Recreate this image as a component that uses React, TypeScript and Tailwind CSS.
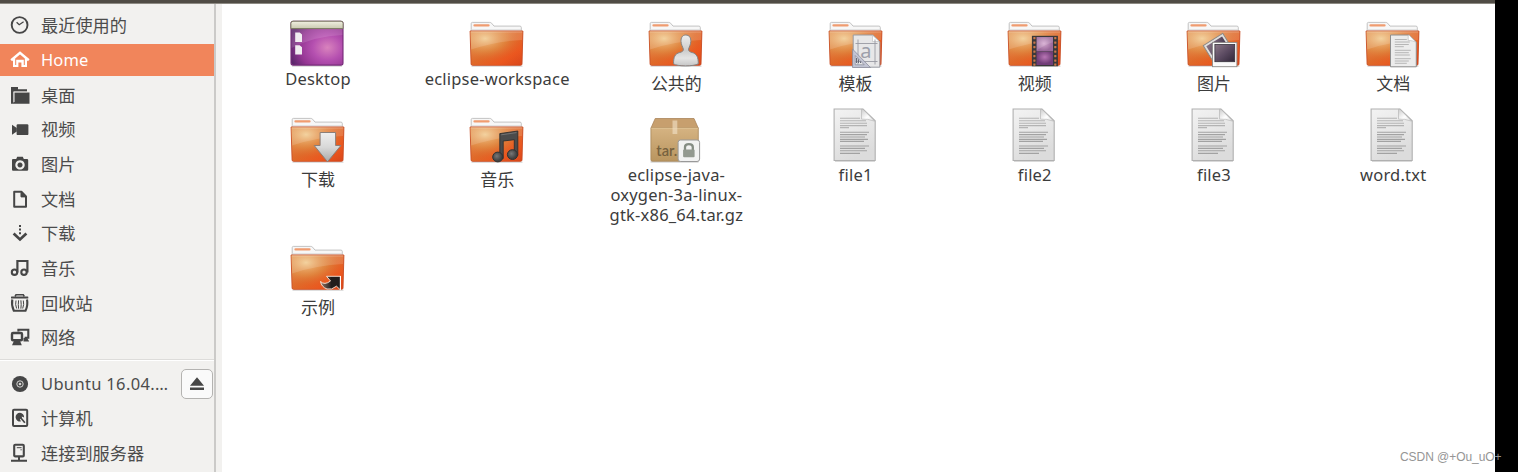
import React from "react";

const INK = "#464646";

function ClockIcon() {
  return (
    <>
      <circle cx="9.6" cy="10" r="7.9" fill="none" stroke={INK} strokeWidth="1.9" />
      <path d="M6.6 7.2 9.2 9.7 13.6 6.8" fill="none" stroke={INK} strokeWidth="1.3" />
    </>
  );
}

function HomeIcon() {
  return (
    <>
      <path d="M1.2 10.2 10 2.8l8.8 7.4" fill="none" stroke="#fff" strokeWidth="2.5" />
      <path d="M3 8.5v8.6h5.4v-4.6h3v4.6H17V8.5h-2.2v6.4h-1V9.8H6.2v5.1h-1V8.5z" fill="#fff" />
    </>
  );
}

function DesktopIcon() {
  return (
    <>
      <path d="M1 2h7v2.2h9v2.2H3.6V18H1z" fill={INK} />
      <path d="M4.5 7.4h15V18.7H1V17h3.5z" fill={INK} />
      <path d="M3.6 17.5V6.9h13.6" fill="none" stroke="#d8d7d5" strokeWidth=".7" />
    </>
  );
}

function VideoIcon() {
  return (
    <>
      <rect x="6.6" y="5.3" width="11.8" height="10.8" rx="1.2" fill={INK} />
      <path d="M2 5.7v10l4.8-3.2V8.9z" fill={INK} />
    </>
  );
}

function CameraIcon() {
  return (
    <path
      fill={INK}
      fillRule="evenodd"
      d="M2 6q0-1 1-1h3.2l1-2.3h5.6l1 2.3H17q1.2 0 1.2 1v9.5q0 1.2-1.2 1.2H3q-1 0-1-1.2zM10 6.2a4.7 4.7 0 1 0 .01 0zM10 8.4a2.5 2.5 0 1 1-.01 0z"
    />
  );
}

function DocIcon() {
  return (
    <>
      <path d="M4.2 2.8h7.2l4.6 4.6v10.4H4.2z" fill="none" stroke={INK} strokeWidth="2" strokeLinejoin="round" />
      <path d="M11 3.3v4.6h4.8z" fill={INK} stroke={INK} />
    </>
  );
}

function DownIcon() {
  return (
    <>
      <path d="M10 2v10" stroke={INK} strokeWidth="2" strokeDasharray="2 1.6" />
      <path d="M3.6 10.4 10 16.4l6.4-6" fill="none" stroke={INK} strokeWidth="2.7" />
    </>
  );
}

function MusicIcon() {
  return (
    <>
      <circle cx="4.5" cy="14.2" r="2.7" fill="none" stroke={INK} strokeWidth="2.1" />
      <circle cx="14" cy="14.2" r="2.7" fill="none" stroke={INK} strokeWidth="2.1" />
      <path d="M7.4 14.4V3h10v11.4" fill="none" stroke={INK} strokeWidth="2.2" />
    </>
  );
}

function TrashIcon() {
  return (
    <>
      <path d="M5 3.5 6 1.8h7.3l1 1.7" fill="none" stroke={INK} strokeWidth="1.5" />
      <rect x="1" y="3.5" width="17.3" height="2" rx=".6" fill={INK} />
      <path d="M2.3 6.5Q1.2 12 3.8 17.8h11.7Q18.2 12 17 6.5" fill="none" stroke={INK} strokeWidth="2.1" />
      <path d="M6 7.5q-1 4 .6 8M13.3 7.5q1 4-.6 8M8.6 7.3q-.6 4.2 0 8.4M10.9 7.3q.6 4.2 0 8.4" fill="none" stroke={INK} strokeWidth="1" />
    </>
  );
}

function NetworkIcon() {
  return (
    <>
      <path d="M8.4 4.6V2.7h9.9v8.1h-3.7" fill="none" stroke={INK} strokeWidth="2.1" />
      <path d="M13.5 11h3.7l2 3.6h-5.7z" fill={INK} />
      <rect x="2" y="6" width="10" height="7.2" rx="1" fill="none" stroke={INK} strokeWidth="2.4" />
      <path d="M4 13.7h6l1.8 4.5H2z" fill={INK} />
    </>
  );
}

function DiscIcon() {
  return (
    <>
      <circle cx="10" cy="10" r="8.1" fill={INK} />
      <circle cx="10" cy="10" r="3.2" fill="none" stroke="#d6d5d3" strokeWidth="1" />
      <circle cx="10" cy="10" r="1.3" fill="#d6d5d3" />
    </>
  );
}

function DriveIcon() {
  return (
    <>
      <rect x="3" y="1.8" width="14.2" height="16.2" rx="1" fill="none" stroke={INK} strokeWidth="2" />
      <path d="M10 4.7a4.4 4.4 0 1 0 .9 8.7l-1-2.3 2-.8-.2-1.8 2.4.9A4.4 4.4 0 0 0 10 4.7z" fill={INK} />
      <path d="m10.3 9.2 4.6 5.6" stroke={INK} strokeWidth="1.7" />
    </>
  );
}

function ServerIcon() {
  return (
    <>
      <rect x="4.2" y="1.8" width="9.6" height="11.6" rx="1" fill="none" stroke={INK} strokeWidth="2.1" />
      <path d="M6.8 4.7h4.8M10.5 6.8h1.2" stroke={INK} strokeWidth="1" />
      <path d="M9 13v4M1 17.8h16" stroke={INK} strokeWidth="2" />
    </>
  );
}

type Place = { label: string; Icon: () => React.JSX.Element; active?: boolean; latin?: string; eject?: boolean };

const places: Place[] = [
  { label: "最近使用的", Icon: ClockIcon },
  { label: "Home", Icon: HomeIcon, active: true, latin: "tracking-[0.1px]" },
  { label: "桌面", Icon: DesktopIcon },
  { label: "视频", Icon: VideoIcon },
  { label: "图片", Icon: CameraIcon },
  { label: "文档", Icon: DocIcon },
  { label: "下载", Icon: DownIcon },
  { label: "音乐", Icon: MusicIcon },
  { label: "回收站", Icon: TrashIcon },
  { label: "网络", Icon: NetworkIcon },
];

const devices: Place[] = [
  { label: "Ubuntu 16.04.…", Icon: DiscIcon, latin: "tracking-[0.33px]", eject: true },
  { label: "计算机", Icon: DriveIcon },
  { label: "连接到服务器", Icon: ServerIcon },
];

function PlaceRow({ label, Icon, active, latin, eject }: Place) {
  return (
    <li className="flex h-[34.67px] items-center">
      <div className={`flex h-[32.5px] w-full items-center pl-[10px] ${active ? "bg-[#f1855b] text-white" : "text-[#4c4c4c]"}`}>
        <svg viewBox="0 0 20 20" className="size-5 shrink-0"><Icon /></svg>
        <span className={`ml-[11px] flex-1 whitespace-nowrap leading-5 ${latin ? `text-[16.5px] ${latin}` : "pt-[2px] text-[17.2px]"}`}>{label}</span>
        {eject && (
          <button className="mr-[1px] flex h-[30px] w-8 items-center justify-center rounded-[5px] border border-[#b4b3b1] bg-[#fafafa]">
            <svg viewBox="0 0 14 14" className="size-[14px]">
              <path d="M7 .2 14 8.7H0zM0 10.5h14v2.4H0z" fill={INK} />
            </svg>
          </button>
        )}
      </div>
    </li>
  );
}

function Folder({ children }: { children?: React.ReactNode }) {
  return (
    <g transform="translate(.5 0)">
      <path d="M2 54.3h51" stroke="#000" strokeOpacity=".13" strokeWidth="1.5" />
      <path d="M1.7 20V11.6q0-1.2 1.2-1.2h17.4q1 0 1.8.8l2.4 2.9h25.9q1.4 0 1.4 1.3V20z" fill="#f7f7f7" stroke="#bcbcbc" strokeWidth=".9" />
      <path d="M5 13.4h14" stroke="#f09c70" strokeWidth="2.3" strokeLinecap="round" />
      <path d="M2 17.9h49.5" stroke="#dcdcdc" strokeWidth="1.4" />
      <path d="M.6 19h52.8l-.9 33q-.1 1.3-1.3 1.3H2.9q-1.2 0-1.3-1.3z" fill="url(#folderBase)" stroke="#c64a20" strokeWidth=".9" />
      <path d="M1 19.4h52l-.9 32.5H2z" fill="url(#folderGlow)" />
      <path d="M1.2 19.5h51.6l-.3 8.5Q27 29 1.6 37.5z" fill="#fff" fillOpacity=".14" />
      <path d="M1.2 19.9h51.6" stroke="#fff" strokeOpacity=".3" />
      {children}
    </g>
  );
}

function TextLines() {
  return (
    <g stroke="#a2a2a2" strokeWidth="1.1">
      <path d="M12 10.2h20M12 12.8h26M12 15.2h27M12 17.6h27M12 19.6h9" strokeOpacity=".75" />
      <path d="M12 24.2h29M12 26.6h27M12 29h25M12 31.4h28M12 33.4h24" />
      <path d="M12 38h29M12 40.4h25M12 42.8h27M12 45.4h20" />
    </g>
  );
}

function TextFile() {
  return (
    <>
      <path d="M7 53.5h40" stroke="#000" strokeOpacity=".15" />
      <path d="M6.1 1h28.9L47.2 12.8v39.7H6.1z" fill="url(#paper)" stroke="#b0b0b0" strokeWidth="1.1" />
      <TextLines />
      <path d="M33.5 1.3v9.8q5.5-.6 13.2 2.1L35 1.3z" fill="url(#curl)" stroke="#b0b0b0" strokeWidth=".6" />
    </>
  );
}

function DesktopArt() {
  return (
    <>
      <path d="M2 54h50" stroke="#000" strokeOpacity=".12" strokeWidth="2" />
      <rect x="1" y="9.3" width="52" height="43.8" rx="2.2" fill="url(#desk)" stroke="#762b78" strokeWidth="1.1" />
      <path d="M1.5 17h51v6Q25 24 1.5 36z" fill="#fff" fillOpacity=".13" />
      <path d="M.9 16.6v-5.3q0-2.1 2.1-2.1h48q2.1 0 2.1 2.1v5.3z" fill="url(#panel)" stroke="#7c7c62" strokeWidth="1" />
      <path d="M5.2 20.6h4.5l2.3 2v7.4H5.2zM5.2 33.2h4.5l2.3 2v7.2H5.2z" fill="#f1edf1" />
    </>
  );
}

function PublicArt() {
  return (
    <Folder>
      <path d="M37.3 23c-3.4 0-5 2.8-4.8 6.5.2 3.3 1.6 5 2.3 7.5.3 2-1 2.8-3.6 3.5-4.7 1.2-6.2 4.5-6.2 11.3 3.8 2.8 20 2.8 24.8 0 0-6.5-1.4-10-6.2-11.3-2.5-.7-3.8-1.5-3.5-3.5.7-2.5 2-4.2 2.2-7.5.2-3.7-1.5-6.5-5-6.5z" fill="url(#silver)" stroke="#858585" strokeWidth="1" />
    </Folder>
  );
}

function TemplateArt() {
  return (
    <Folder>
      <path d="M24.7 23h19.6l7 7v25.2H24.7z" fill="#e7e7e8" stroke="#999ba2" strokeWidth="1" />
      <path d="M44 23.2v6.3h6.8z" fill="#fff" stroke="#bbb" strokeWidth=".6" />
      <path d="M27 31.5h22M27 49.5h22M29.5 27.5v25M46.5 27.5v25" stroke="#999aa3" strokeWidth=".9" />
      <text x="31.8" y="46.3" fontSize="20" fontFamily="Noto Sans, sans-serif" fill="#9d9faa">a</text>
      <path fillRule="evenodd" d="M24 37 42 55.6H24zM26.7 43.5v9.3h9z" fill="#bfc1d1" fillOpacity=".9" stroke="#858797" strokeWidth=".7" />
      <path d="M28 46v5M30 47.5v3.5M32 49.5V51" stroke="#666877" />
    </Folder>
  );
}

function VideoArt() {
  const holes = [24.9, 29.4, 33.9, 38.4, 42.9, 47.4, 51.4];
  return (
    <Folder>
      <rect x="24.4" y="23.8" width="26" height="30.5" fill="#39383a" />
      {holes.map((y) => (
        <g key={y} fill="#c8774a">
          <rect x="25.8" y={y} width="2.2" height="2.3" rx=".4" />
          <rect x="46.7" y={y} width="2.2" height="2.3" rx=".4" />
        </g>
      ))}
      <rect x="29" y="25" width="16.5" height="14.4" fill="url(#filmA)" />
      <rect x="29" y="39.7" width="16.5" height="13.3" fill="url(#filmB)" />
      <path d="M29.3 25.2h16v5q-7 2-16 8z" fill="#fff" fillOpacity=".15" />
    </Folder>
  );
}

function PictureArt() {
  return (
    <Folder>
      <g transform="rotate(-32 30 36)">
        <rect x="20" y="27" width="23" height="21" fill="#e0dfdd" stroke="#888" strokeWidth=".9" />
        <rect x="22.2" y="29.2" width="18.6" height="15" fill="url(#photo)" />
      </g>
      <rect x="26" y="30.4" width="24.4" height="24.3" fill="#fafafa" stroke="#8c8a88" strokeWidth=".9" />
      <rect x="28.4" y="32.5" width="19.8" height="17.2" fill="url(#photo)" stroke="#37323c" strokeWidth=".8" />
    </Folder>
  );
}

function DocumentArt() {
  return (
    <Folder>
      <path d="M25 23h18.5l7.3 7v24.8H25z" fill="#ececec" stroke="#8e8e8e" strokeWidth="1" />
      <path d="M42.7 23.2v5.2q4 0 7.6 1.7L43.8 23.2z" fill="#fff" stroke="#b4b4b4" strokeWidth=".6" />
      <path d="M29.3 27.5h12M29.3 30h15M29.3 32.5h14M29.3 34.7h9M29.3 38.3h16M29.3 40.7h14M29.3 43h15M29.3 46.7h16M29.3 49h14M29.3 51.3h12" stroke="#b0b0b0" strokeWidth=".9" />
    </Folder>
  );
}

function DownloadArt() {
  return (
    <Folder>
      <path d="M29.6 24.5h15.5v13h5.3L37 53.8 23.7 37.5h5.9z" fill="url(#arrow)" stroke="#8b7f79" strokeWidth="1" />
    </Folder>
  );
}

function MusicArt() {
  return (
    <Folder>
      <path d="M30.3 25.6 48.3 23v24.5h-3.5V31.7L33.7 33v17.5h-3.4z" fill="#4b4b4b" stroke="#303030" strokeWidth=".9" />
      <ellipse cx="28.3" cy="49" rx="5.1" ry="4.9" fill="url(#noteBall)" stroke="#333" />
      <ellipse cx="43" cy="46.6" rx="5.1" ry="4.9" fill="url(#noteBall)" stroke="#333" />
      <path d="M31.7 26.8 47 24.6" stroke="#858585" strokeWidth=".7" />
    </Folder>
  );
}

function LinkArt() {
  return (
    <Folder>
      <path d="M30 45.5Q34 49.5 40 45L36 40.3h14V54l-4-3.8q-5 4-9.500 2.800Q31 51 30 45.500z" fill="url(#linkArrow)" stroke="#fbe9dd" strokeWidth=".9" />
      <path d="M49.900 40v14" stroke="#fff" strokeWidth="1.1" />
    </Folder>
  );
}

function ArchiveArt() {
  return (
    <g transform="translate(1.5 0)">
      <path d="M1 53.800h48" stroke="#000" strokeOpacity=".16" strokeWidth="2" />
      <path d="M5.700 10.500h38.800L48.700 20H1.500z" fill="#c79f6e" stroke="#ab855b" strokeWidth=".8" />
      <path d="M1.400 20h47.400v31.700q0 1.500-1.500 1.500H2.800q-1.400 0-1.400-1.500z" fill="url(#box)" stroke="#a7875b" strokeWidth=".8" />
      <path d="M1.800 20.300h46.600" stroke="#e5c99a" strokeWidth="1.1" />
      <path d="M23 12.500h4.800v13.500H23z" fill="#efdfc3" fillOpacity=".65" />
      <text x="6.800" y="48" fontSize="15.500" fontWeight="600" fontFamily="Lato, sans-serif" fill="#76613e" textLength="21" lengthAdjust="spacingAndGlyphs">tar.</text>
      <rect x="28.600" y="32" width="21.500" height="21.500" rx="2.500" fill="#f2f2f2" stroke="#999" strokeWidth="1" />
      <path d="M35.500 43v-4q0-2.800 3.900-2.800t3.900 2.800v4" fill="none" stroke="#858d84" strokeWidth="2.300" />
      <rect x="33.600" y="41.600" width="11.500" height="7.700" rx="1" fill="#939990" />
    </g>
  );
}

function Gradients() {
  return (
    <svg className="absolute size-0" aria-hidden="true">
      <defs>
        <linearGradient id="folderBase" x1="0" y1="0" x2="1" y2="1"><stop stopColor="#e99a5c" /><stop offset=".5" stopColor="#e0702c" /><stop offset=".75" stopColor="#ee5a20" /><stop offset="1" stopColor="#d8441a" /></linearGradient>
        <radialGradient id="folderGlow" cx=".28" cy=".22" r=".72"><stop stopColor="#f2cf94" stopOpacity=".95" /><stop offset=".55" stopColor="#e0924a" stopOpacity=".55" /><stop offset="1" stopColor="#dd4c1c" stopOpacity=".2" /></radialGradient>
        <linearGradient id="paper" x1="0" y1="0" x2=".4" y2="1"><stop stopColor="#f3f3f3" /><stop offset="1" stopColor="#dcdcdc" /></linearGradient>
        <linearGradient id="curl" x1="0" y1="0" x2="1" y2="1"><stop stopColor="#ccc" /><stop offset=".55" stopColor="#fff" /><stop offset="1" stopColor="#ddd" /></linearGradient>
        <radialGradient id="desk" cx=".7" cy=".6" r=".75"><stop stopColor="#d983bd" /><stop offset=".38" stopColor="#b550b0" /><stop offset=".72" stopColor="#943693" /><stop offset="1" stopColor="#5b276b" /></radialGradient>
        <linearGradient id="panel" x1="0" y1="0" x2="0" y2="1"><stop stopColor="#f1f0e2" /><stop offset="1" stopColor="#cac9b0" /></linearGradient>
        <linearGradient id="silver" x1="0" y1="0" x2="0" y2="1"><stop stopColor="#eee" /><stop offset=".5" stopColor="#ccc" /><stop offset=".75" stopColor="#e4e4e4" /><stop offset="1" stopColor="#c6c6c6" /></linearGradient>
        <radialGradient id="filmA" cx=".45" cy=".45"><stop stopColor="#d4a7cf" /><stop offset="1" stopColor="#9b6a9c" /></radialGradient>
        <radialGradient id="filmB" cx=".5" cy=".4"><stop stopColor="#b976b5" /><stop offset="1" stopColor="#713d78" /></radialGradient>
        <linearGradient id="photo" x1="0" y1="0" x2="1" y2="1"><stop stopColor="#897685" /><stop offset=".5" stopColor="#5c4b62" /><stop offset="1" stopColor="#302638" /></linearGradient>
        <linearGradient id="arrow" x1="0" y1="0" x2="0" y2="1"><stop stopColor="#efefef" /><stop offset=".5" stopColor="#d8d8d8" /><stop offset="1" stopColor="#a9a9a9" /></linearGradient>
        <radialGradient id="noteBall" cx=".4" cy=".4"><stop stopColor="#777" /><stop offset="1" stopColor="#414141" /></radialGradient>
        <linearGradient id="linkArrow" x1="0" y1="0" x2="1" y2="0"><stop stopColor="#917768" /><stop offset=".55" stopColor="#221d1c" /></linearGradient>
        <linearGradient id="box" x1="0" y1="0" x2="0" y2="1"><stop stopColor="#d5b382" /><stop offset="1" stopColor="#b9955f" /></linearGradient>
      </defs>
    </svg>
  );
}

type Item = { lines: string[]; Art: () => React.JSX.Element; cjk?: boolean };

const items: Item[] = [
  { lines: ["Desktop"], Art: DesktopArt },
  { lines: ["eclipse-workspace"], Art: () => <Folder /> },
  { lines: ["公共的"], Art: PublicArt, cjk: true },
  { lines: ["模板"], Art: TemplateArt, cjk: true },
  { lines: ["视频"], Art: VideoArt, cjk: true },
  { lines: ["图片"], Art: PictureArt, cjk: true },
  { lines: ["文档"], Art: DocumentArt, cjk: true },
  { lines: ["下载"], Art: DownloadArt, cjk: true },
  { lines: ["音乐"], Art: MusicArt, cjk: true },
  { lines: ["eclipse-java-", "oxygen-3a-linux-", "gtk-x86_64.tar.gz"], Art: ArchiveArt },
  { lines: ["file1"], Art: TextFile },
  { lines: ["file2"], Art: TextFile },
  { lines: ["file3"], Art: TextFile },
  { lines: ["word.txt"], Art: TextFile },
  { lines: ["示例"], Art: LinkArt, cjk: true },
];

function FileItem({ lines, Art, cjk }: Item) {
  return (
    <div className="flex flex-col items-center text-[#3c3c3c]">
      <svg viewBox="0 0 56 56" className="size-14 shrink-0"><Art /></svg>
      <div className={cjk ? "pt-[6px] text-[17px] leading-5" : "pt-[1px] text-[16.5px] leading-5 tracking-[0.2px]"}>
        {lines.map((line) => (
          <div key={line} className="whitespace-nowrap text-center">{line}</div>
        ))}
      </div>
    </div>
  );
}

export default function App() {
  return (
    <div className="relative flex h-[472px] w-[1518px] overflow-hidden bg-black font-['Noto_Sans','Noto_Sans_CJK_SC',sans-serif]">
      <Gradients />
      <div className="flex w-[1495px] flex-col bg-white">
        <div className="h-1 shrink-0 border-b border-[#8d8a83] bg-[#504c45]" />
        <div className="flex min-h-0 flex-1">
          <aside className="w-[216px] shrink-0 border-r-2 border-[#cbcac8] bg-[#f2f1ef] pt-1">
            <ul>{places.map((p) => <PlaceRow key={p.label} {...p} />)}</ul>
            <div className="mt-[4.3px] h-[2px] border-b border-white bg-[#dddcda]" />
            <ul className="mt-[5.5px]">{devices.map((p) => <PlaceRow key={p.label} {...p} />)}</ul>
          </aside>
          <div className="w-[6px] shrink-0 bg-[#f2f1ef]" />
          <main className="ml-[6.4px] grid h-[330px] w-[1254.4px] shrink-0 grid-cols-7 grid-rows-[96px_128px_90px] pt-2">
            {items.map((item) => <FileItem key={item.lines[0]} {...item} />)}
          </main>
        </div>
      </div>
      <div className="absolute left-[1400px] top-[449px] whitespace-nowrap font-['Liberation_Sans',sans-serif] text-[12px] leading-4 tracking-[-0.05px] text-[#959595]">CSDN @+Ou_uO+</div>
    </div>
  );
}
